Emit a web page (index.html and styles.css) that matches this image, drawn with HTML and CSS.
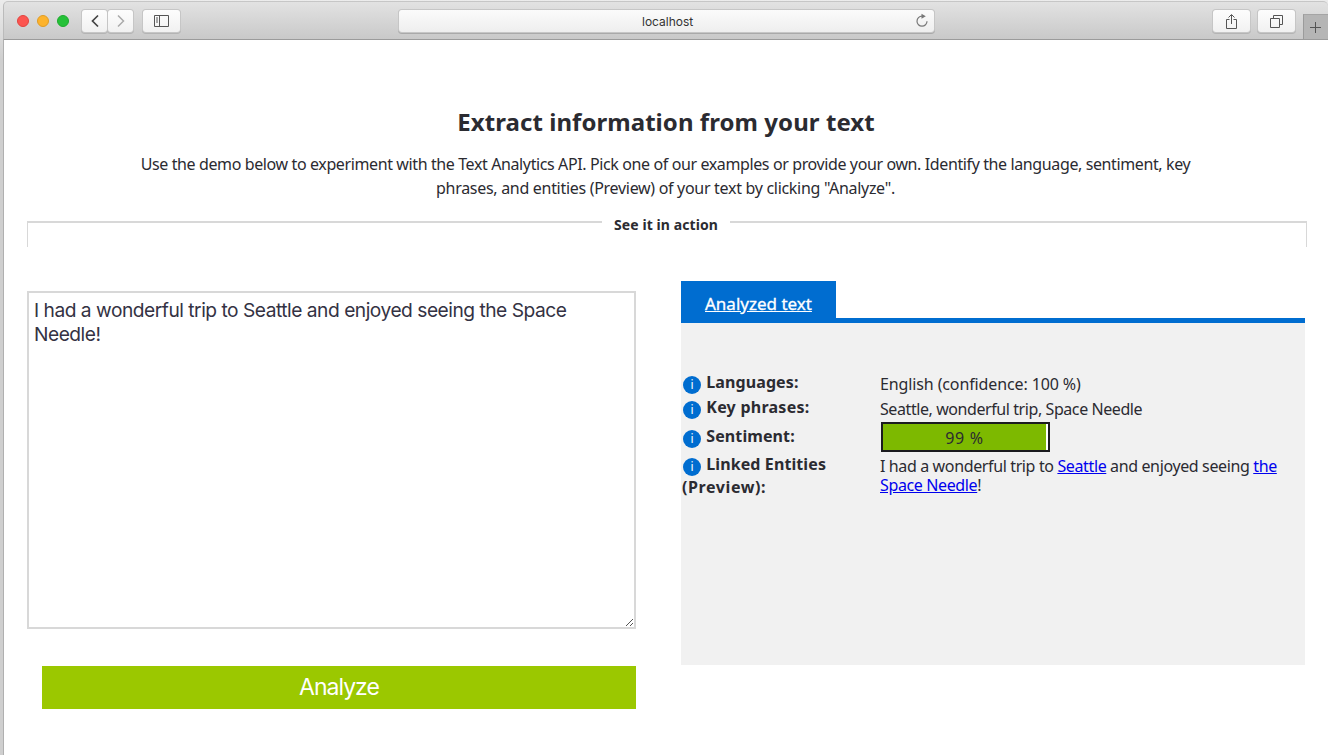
FILE: index.html
```html
<!DOCTYPE html>
<html lang="en">
<head>
<meta charset="utf-8">
<title>Text Analytics demo</title>
<link rel="stylesheet" href="styles.css">
</head>
<body>
<div class="window">
  <header class="toolbar">
    <div class="lights"><i class="light red"></i><i class="light amber"></i><i class="light green"></i></div>
    <div class="nav">
      <button class="btn nav-btn" aria-label="Back"><svg width="24" height="22" viewBox="0 0 24 22"><path d="M15 5.500 9.500 11l5.500 5.500" fill="none" stroke="#444" stroke-width="1.700"/></svg></button>
      <button class="btn nav-btn" aria-label="Forward"><svg width="24" height="22" viewBox="0 0 24 22"><path d="M9 5.500 14.500 11 9 16.500" fill="none" stroke="#aaa" stroke-width="1.500"/></svg></button>
    </div>
    <button class="btn wide sidebar" aria-label="Sidebar"><svg width="16" height="12" viewBox="0 0 16 12"><path d="M.5.500h14v11H.5zM5.500.500v11M2 3h2M2 5h2M2 7h2" fill="none" stroke="#555"/></svg></button>
    <div class="address"><span>localhost</span><svg width="14" height="16" viewBox="0 0 14 16"><path d="M7 3.200a5 5 0 1 0 5 5" fill="none" stroke="#777" stroke-width="1.200"/><path d="M6.500.800 10.800 3.300 6.500 5.800z" fill="#777"/></svg></div>
    <button class="btn wide share" aria-label="Share"><svg width="13" height="17" viewBox="0 0 13 17"><path d="M4.500 6.500h-3v9h10v-9h-3M6.500 11V2M3.500 4.500l3-3 3 3" fill="none" stroke="#555"/></svg></button>
    <button class="btn wide tabs" aria-label="Tabs"><svg width="13" height="13" viewBox="0 0 13 13"><path d="M.5 3.500h9v9h-9zM3.500 3V.5h9v9H10" fill="none" stroke="#555"/></svg></button>
    <div class="new-tab"><svg width="11" height="11" viewBox="0 0 11 11"><path d="M5.500 0v11M0 5.500h11" stroke="#555"/></svg></div>
  </header>
  <main class="page">
    <h1 class="title">Extract information from your text</h1>
    <p class="intro"><span class="intro-a">Use the demo below to experiment with the Text Analytics API. Pick one of our examples or provide your own. Identify the language, sentiment, key</span><br><span class="intro-b">phrases, and entities (Preview) of your text by clicking "Analyze".</span></p>
    <div class="divider"><div class="rule left"></div><span>See it in action</span><div class="rule right"></div></div>
    <div class="columns">
      <section class="input">
        <div class="textarea">I had a wonderful trip to Seattle and enjoyed seeing the Space<br>Needle!<svg class="grip" width="9" height="9" viewBox="0 0 9 9"><path d="M1 8 8 1M5 8l3-3" stroke="#555" fill="none"/></svg></div>
        <button class="analyze">Analyze</button>
      </section>
      <section class="result">
        <div class="tabbar"><a class="tab">Analyzed text</a></div>
        <div class="panel">
          <div class="row languages"><b><i class="info">i</i> <span>Languages:</span></b><span class="value">English (confidence: 100 %)</span></div>
          <div class="row phrases"><b><i class="info">i</i> <span>Key phrases:</span></b><span class="value">Seattle, wonderful trip, Space Needle</span></div>
          <div class="row sentiment"><b><i class="info">i</i> <span>Sentiment:</span></b><div class="meter"><div class="fill">99 %</div></div></div>
          <div class="row entities"><b><i class="info">i</i> <span>Linked Entities</span><br><span class="second">(Preview):</span></b><span class="value">I had a wonderful trip to <a>Seattle</a> and enjoyed seeing <a>the</a><br><a>Space Needle</a>!</span></div>
        </div>
      </section>
    </div>
  </main>
</div>
</body>
</html>
```
FILE: styles.css
```css
* { box-sizing: border-box; }
body { margin: 0; background: linear-gradient(#ececec, #cfcfcf 60px, #cfcfcf); color: #2b2b31; font: 16px/24px "Noto Sans", sans-serif; }
.window { height: 755px; padding: 1px 0 0 3px; overflow: hidden; }
.toolbar { display: flex; align-items: flex-start; height: 39px; padding-top: 8px; padding-left: 13px; background: linear-gradient(#e2e2e2, #c9c9c9); border-top: 1px solid #c6c6c6; border-bottom: 1px solid #9b9b9b; border-left: 1px solid #bbb; border-radius: 5px 5px 0 0; }
.lights { display: flex; gap: 8px; padding-top: 5px; width: 65px; }
.light { width: 12px; height: 12px; border-radius: 50%; }
.red { background: #fc5550; border: 1px solid #e2443f; }
.amber { background: #fdb32c; border: 1px solid #e09c24; }
.green { background: #25c138; border: 1px solid #1dab2d; }
.nav { display: flex; }
.btn { display: flex; align-items: center; justify-content: center; height: 22px; padding: 0; border: 0; border-radius: 3px; background: linear-gradient(#fdfdfd, #f1f1f1); box-shadow: 0 0 0 1px #c6c6c6, 0 1px 0 1px #b4b4b4; }
.nav-btn { width: 25px; margin-right: 1px; }
.wide { width: 37px; }
.sidebar { margin-left: 9px; }
.address { display: flex; align-items: center; width: 535px; height: 22px; margin-left: 219px; padding: 0 5px 0 243px; background: linear-gradient(#fbfbfb, #eee); border-radius: 3px; box-shadow: 0 0 0 1px #c6c6c6, 0 1px 0 1px #a9a9a9; font: 12px/22px Inter, sans-serif; color: #333; }
.address span { padding-top: 1px; }
.address svg { margin-left: auto; }
.share { margin-left: 279px; }
.tabs { margin-left: 8px; }
.new-tab { display: flex; align-items: center; justify-content: center; width: 25px; height: 25px; margin: 4px 0 0 8px; padding-right: 2px; background: #b5b5b5; border-left: 1px solid #9b9b9b; border-top: 1px solid #a5a5a5; flex: none; }
.page { height: 715px; padding: 66px 21px 0 23px; background: #fff; border-left: 1px solid #b0b0b0; }
.title { margin: 0 2px 0 0; font-size: 24px; line-height: 32px; letter-spacing: .06px; text-align: center; }
.intro { margin: 14px 3px 0 0; text-align: center; white-space: nowrap; }
.intro-a { letter-spacing: -.385px; }
.intro-b { letter-spacing: -.3px; }
.divider { display: flex; align-items: flex-start; justify-content: space-between; height: 26px; margin-top: 21px; font-size: 14px; font-weight: 700; line-height: 8px; letter-spacing: .08px; white-space: nowrap; }
.rule { width: 575px; height: 26px; border-top: 2px solid #d8d8d8; }
.rule.left { border-left: 1px solid #d8d8d8; }
.rule.right { width: 577px; border-right: 1px solid #d8d8d8; }
.columns { display: flex; justify-content: space-between; margin-top: 34px; padding-right: 2px; }
.input { width: 609px; padding-top: 10px; }
.textarea { position: relative; height: 338px; padding: 5px; border: 2px solid #d8d8d8; font: 19.200px/24px Inter, sans-serif; letter-spacing: -.49px; color: #343243; white-space: nowrap; }
.grip { position: absolute; right: 0; bottom: 0; }
.analyze { display: block; width: 594px; height: 43px; margin: 37px 0 0 15px; padding: 0; border: 0; background: #9bc800; color: #fff; font: 23px/43px Inter, sans-serif; letter-spacing: -1px; }
.result { width: 624px; }
.tabbar { display: flex; height: 42px; border-bottom: 5px solid #006dd0; }
.tab { width: 155px; height: 42px; padding: 11px 0 0 24px; background: #006dd0; color: #fff; font-size: 17px; line-height: 24px; text-decoration: underline; white-space: nowrap; -webkit-text-stroke: .3px #fff; }
.panel { height: 342px; padding-top: 47px; background: #f1f1f1; line-height: 19px; }
.row { display: flex; align-items: flex-start; white-space: nowrap; }
.row b { display: block; width: 199px; padding: 1px 0 0 1px; line-height: 23px; letter-spacing: .1px; }
.info { display: inline-block; width: 18px; height: 18px; margin: -3px 1px; border-radius: 50%; background: #006dd0; color: #fff; font: 12px/18px "Noto Sans", sans-serif; text-align: center; vertical-align: -1px; }
.phrases b span { letter-spacing: .25px; }
.row .second { letter-spacing: .6px; }
.value { padding-top: 5px; letter-spacing: -.42px; }
.languages .value { letter-spacing: -.12px; }
.entities .value { letter-spacing: -.37px; }
.languages, .phrases { height: 25px; }
.sentiment { height: 32px; }
.sentiment b { padding-top: 5px; }
.meter { width: 169px; height: 30px; margin: 2px 0 0 1px; border: 2px solid #1b1b1f; background: #fff; }
.fill { width: 163px; height: 26px; background: #7db900; text-align: center; line-height: 28px; letter-spacing: .7px; }
.value a { color: #00e; text-decoration: underline; }
```
